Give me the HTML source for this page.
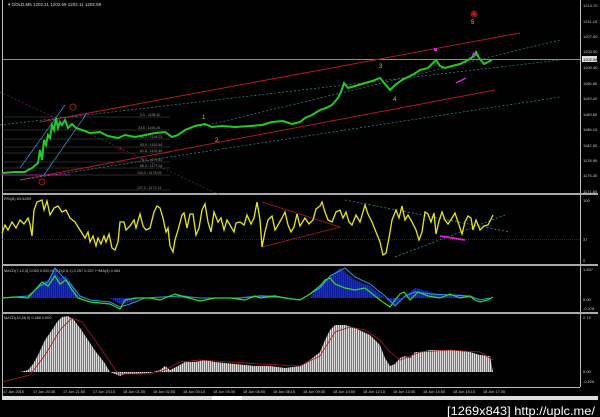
<!DOCTYPE html>
<html><head><meta charset="utf-8"><style>
html,body{margin:0;padding:0;background:#000;width:600px;height:417px;overflow:hidden}
svg{display:block}
text{font-family:"Liberation Sans",sans-serif}
</style></head><body>
<svg width="600" height="417" viewBox="0 0 600 417" xmlns="http://www.w3.org/2000/svg">
<defs>
<pattern id="gb" width="2" height="4" patternUnits="userSpaceOnUse"><rect width="2" height="4" fill="#777"/><rect width="1" height="4" fill="#ddd"/></pattern>
<pattern id="bb" width="2" height="4" patternUnits="userSpaceOnUse"><rect width="2" height="4" fill="#1a2fd0"/><rect width="1" height="4" fill="#0a1a9a"/></pattern>
</defs>
<rect width="600" height="417" fill="#000"/>
<g stroke="#bbb" stroke-width="1" fill="none">
<line x1="2.5" y1="0" x2="2.5" y2="397"/>
<line x1="580.5" y1="0" x2="580.5" y2="387"/>
<line x1="2" y1="387.5" x2="580" y2="387.5"/>
</g>
<rect x="2" y="193" width="596" height="2" fill="#aaa"/>
<rect x="2" y="264" width="596" height="2" fill="#aaa"/>
<rect x="2" y="312" width="596" height="2" fill="#aaa"/>
<rect x="2" y="396" width="596" height="4" fill="#ddd"/>
<rect x="212" y="396" width="30" height="4" fill="#fff"/>
<text x="8" y="6" font-size="4.5" fill="#ddd">▾ GOLD,M5 1202.11 1202.69 1202.11 1202.58</text>
<line x1="2" y1="59.5" x2="580" y2="59.5" stroke="#bbb" stroke-width="0.8"/>
<g stroke="#555" stroke-width="0.6">
<line x1="2" y1="117" x2="170" y2="117"/><line x1="2" y1="130" x2="170" y2="130"/>
<line x1="2" y1="139" x2="170" y2="139"/><line x1="2" y1="147" x2="170" y2="147"/>
<line x1="2" y1="153" x2="170" y2="153"/><line x1="2" y1="162" x2="170" y2="162"/>
<line x1="2" y1="168" x2="170" y2="168"/><line x1="2" y1="175" x2="170" y2="175"/>
<line x1="2" y1="190" x2="170" y2="190"/>
</g>
<g font-size="3.5" fill="#999">
<text x="140" y="116">0.0 - 1195.40</text><text x="138" y="129">23.6 - 1195.25</text>
<text x="140" y="138">38.2 - 1194.03</text><text x="140" y="146">50.0 - 1192.46</text>
<text x="140" y="152">61.8 - 1192.46</text><text x="140" y="161">76.4 - 1179.53</text>
<text x="140" y="167">88.2 - 1177.04</text><text x="137" y="174">100.0 - 1175.05</text>
<text x="137" y="189">127.2 - 1172.14</text>
</g>
<g fill="none">
<line x1="40" y1="122" x2="520" y2="33" stroke="#b01828" stroke-width="1"/>
<line x1="20" y1="180" x2="495" y2="90" stroke="#b01828" stroke-width="1"/>
<line x1="0" y1="92" x2="220" y2="195" stroke="#6a2a6a" stroke-width="0.7" stroke-dasharray="2,2"/>
<line x1="200" y1="127" x2="560" y2="40" stroke="#3a8a9a" stroke-width="0.7" stroke-dasharray="2,2"/>
<line x1="0" y1="125" x2="560" y2="60" stroke="#3a8a9a" stroke-width="0.7" stroke-dasharray="2,2"/>
<line x1="20" y1="180" x2="560" y2="97" stroke="#3a8a9a" stroke-width="0.7" stroke-dasharray="2,2"/>
<line x1="20" y1="168" x2="65" y2="105" stroke="#3a9ad0" stroke-width="0.7"/>
<line x1="44" y1="175" x2="87" y2="113" stroke="#3a9ad0" stroke-width="0.7"/>
<line x1="2" y1="175" x2="70" y2="175" stroke="#d020d0" stroke-width="0.8"/>
<polyline stroke="#22cc22" stroke-width="2" points="2,173 15,172 25,172 28,170 32,168 38,163 40,150 42,160 44,140 46,145 48,135 50,138 52,125 54,130 56,118 58,128 60,122 62,125 65,120 68,128 72,124 76,128 82,130 90,133 100,132 108,136 118,138 125,135 135,137 145,135 155,133 165,132 172,137 178,135 185,130 195,126 205,124 212,127 222,126 235,127 250,126 262,125 272,122 283,121 292,124 300,122 305,118 312,115 320,110 326,108 332,105 338,98 341,92 344,83 348,88 355,86 362,84 372,81 380,78 385,84 390,90 395,85 402,80 410,76 414,74 420,70 428,68 434,62 436,60 440,66 445,68 452,66 460,64 468,60 474,56 476,52 479,58 484,64 488,62 492,60"/>
</g>
<g font-size="6">
<text x="202" y="119" fill="#d8c040">1</text><text x="215" y="142" fill="#d8c040">2</text>
<text x="379" y="68" fill="#d8c040">3</text><text x="393" y="101" fill="#d8c040">4</text>
<text x="471" y="24" fill="#d8c040">5</text>
</g>
<g fill="none" stroke="#d02020" stroke-width="0.8">
<circle cx="73" cy="107" r="3"/><circle cx="42" cy="182" r="3"/><circle cx="474" cy="14" r="3"/>
</g>
<circle cx="474" cy="14" r="2" fill="#c01818"/>
<text x="118" y="150" font-size="4" fill="#d02020">(4)</text>
<line x1="456" y1="83" x2="466" y2="78" stroke="#e020e0" stroke-width="1.5"/>
<polygon points="473,52 478,56 472,56" fill="#e020e0"/>
<rect x="434" y="48" width="3" height="3" fill="#e020e0"/>
<g font-size="4" fill="#ccc">
<text x="583" y="7">1214.70</text><text x="583" y="23">1211.10</text><text x="583" y="38">1207.50</text>
<text x="583" y="53">1203.90</text><text x="583" y="69">1200.40</text><text x="583" y="85">1196.80</text>
<text x="583" y="100">1193.20</text><text x="583" y="116">1189.60</text><text x="583" y="131">1186.10</text>
<text x="583" y="147">1182.50</text><text x="583" y="162">1178.90</text><text x="583" y="177">1175.30</text>
<text x="583" y="193">1171.80</text>
<text x="583" y="202">100</text><text x="583" y="241">37</text><text x="583" y="262">0</text>
<text x="583" y="271">1.837</text><text x="583" y="301">0.00</text><text x="583" y="310">-0.478</text>
<text x="583" y="319">2.74</text><text x="583" y="373">0.00</text><text x="583" y="383">-0.626</text>
</g>
<rect x="582" y="56" width="15" height="6" fill="#ddd"/>
<text x="583" y="61" font-size="4" fill="#000">1202.58</text>
<text x="4" y="200" font-size="4" fill="#ccc">RSI(8) 63.6259</text>
<line x1="2" y1="239.5" x2="580" y2="239.5" stroke="#8a2a9a" stroke-width="0.6" stroke-dasharray="1,1"/>
<g fill="none" stroke-width="0.8">
<polyline stroke="#b01828" points="262,202 340,227 262,247"/>
<polyline stroke="#3a8a9a" stroke-dasharray="2,2" points="345,200 510,232"/>
<polyline stroke="#3a8a9a" stroke-dasharray="2,2" points="395,257 505,215"/>
</g>
<polyline fill="none" stroke="#e8e820" stroke-width="1.3" points="2,233 5,225 8,230 12,222 16,228 20,220 24,224 28,218 30,224 32,236 34,210 37,202 42,200 44,210 47,201 50,215 54,208 58,206 62,212 66,210 70,218 75,222 80,230 85,238 88,232 90,242 93,236 96,246 98,238 101,244 104,236 106,242 109,234 112,248 115,250 118,242 120,222 124,222 126,230 130,226 134,220 136,228 140,214 143,226 146,230 150,228 154,212 157,206 160,208 163,218 166,232 168,228 170,246 173,252 175,240 178,230 182,215 184,213 187,228 190,214 193,214 196,235 199,228 202,210 205,204 208,222 211,232 214,212 218,222 221,218 224,230 227,220 230,225 234,232 236,223 240,222 244,225 247,215 251,224 254,218 257,202 260,220 262,247 265,232 268,220 272,216 275,230 278,225 282,218 285,212 288,225 291,232 294,227 297,214 300,226 305,218 309,224 313,220 316,209 320,206 322,202 325,212 328,220 332,222 336,212 340,210 343,218 346,212 349,222 352,225 356,215 360,222 365,205 368,214 372,222 376,232 380,242 383,255 386,253 389,238 392,220 396,210 399,218 402,206 405,220 408,215 412,222 416,230 419,240 422,232 425,212 428,214 431,222 434,213 436,234 439,221 442,212 445,220 448,224 452,218 455,213 458,222 462,234 465,222 468,216 471,218 473,230 476,220 480,230 484,226 488,225 493,215"/>
<line x1="440" y1="236" x2="465" y2="240" stroke="#e020e0" stroke-width="1.8"/>
<text x="4" y="272" font-size="3.8" fill="#ccc">MACD(7,12,3) 0.063 0.020 MACD(2,8,1) 0.257 0.257 ++MA(3) 0.063</text>
<polygon fill="url(#bb)" points="2,298 28,298 35,290 42,282 48,280 55,270 60,278 66,276 72,284 78,295 85,298 110,298 120,304 130,302 140,298 175,298 185,295 195,298 230,298 260,295 275,295 285,298 310,298 320,285 325,280 340,268 345,272 355,280 370,286 385,298 395,306 400,300 410,292 415,288 430,292 445,296 460,294 475,298 480,298 2,298"/>
<polyline fill="none" stroke="#2a9ae0" stroke-width="1" points="2,298 28,296 40,286 48,282 55,268 62,276 72,286 80,296 90,300 110,302 120,307 130,304 145,298 180,296 200,298 240,298 260,296 280,297 300,300 320,288 330,276 345,268 355,277 370,284 385,296 395,306 405,296 415,292 430,294 450,295 470,296 480,300 490,298"/>
<polyline fill="none" stroke="#30dd30" stroke-width="1.2" points="2,298 15,297 28,298 35,290 42,282 48,286 55,276 60,284 66,280 72,290 78,298 90,302 110,304 120,309 125,300 135,298 150,298 160,300 175,294 185,297 200,301 215,298 230,298 245,300 255,296 260,298 275,296 285,298 300,300 310,294 320,286 325,280 330,278 335,284 345,288 355,290 365,288 370,292 380,300 390,307 395,300 400,294 404,292 410,300 418,292 428,296 440,298 450,294 460,298 470,296 475,300 480,302 488,300 493,297"/>
<text x="4" y="319" font-size="3.8" fill="#ccc">MACD(12,26,9) 0.466 0.600</text>
<polygon fill="url(#gb)" points="2,372 20,372 28,370 33,364 38,355 45,340 52,330 57,322 62,317 68,316 74,320 80,328 88,340 96,352 104,362 110,372 120,376 125,374 150,373 160,370 165,366 170,370 178,366 185,362 195,362 205,360 215,362 235,364 255,366 270,366 285,368 300,366 310,360 320,352 325,340 330,330 335,325 345,325 355,328 370,335 380,345 385,358 390,366 395,364 400,358 405,356 410,358 415,352 420,352 430,350 450,350 470,352 480,355 490,356 493,372"/>
<polyline fill="none" stroke="#b01818" stroke-width="0.8" points="2,382 30,375 45,355 60,330 72,318 82,322 95,340 110,362 118,374 150,374 165,370 180,362 200,360 230,362 260,364 300,366 320,356 335,332 350,327 365,330 380,340 390,352 400,360 410,356 420,352 450,350 480,352 493,360"/>
<g font-size="3.8" fill="#ccc">
<text x="3" y="393">17 Jun 2015</text><text x="33" y="393">17 Jun 20:35</text><text x="63" y="393">17 Jun 21:55</text>
<text x="93" y="393">17 Jun 23:15</text><text x="123" y="393">18 Jun 01:35</text><text x="153" y="393">18 Jun 02:55</text>
<text x="183" y="393">18 Jun 04:15</text><text x="213" y="393">18 Jun 05:35</text><text x="243" y="393">18 Jun 06:55</text>
<text x="273" y="393">18 Jun 08:15</text><text x="303" y="393">18 Jun 09:35</text><text x="333" y="393">18 Jun 10:55</text>
<text x="363" y="393">18 Jun 12:15</text><text x="393" y="393">18 Jun 13:35</text><text x="423" y="393">18 Jun 14:55</text>
<text x="453" y="393">18 Jun 16:15</text><text x="483" y="393">18 Jun 17:35</text>
</g>
<text x="447" y="415" font-size="12" fill="#fff" textLength="148" lengthAdjust="spacingAndGlyphs" font-family="Liberation Mono,monospace">[1269x843] http://uplc.me/</text>
</svg>
</body></html>
